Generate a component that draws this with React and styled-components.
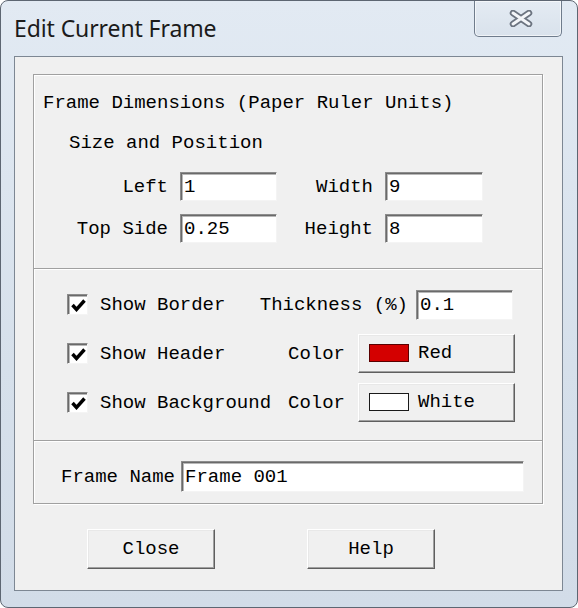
import React from 'react'
import styled, { createGlobalStyle } from 'styled-components'

const GlobalStyle = createGlobalStyle`
  html, body {
    margin: 0;
    padding: 0;
    background: #ffffff;
  }
  * {
    box-sizing: border-box;
  }
`

const App = () => (
  <>
    <GlobalStyle />
    <Window>
      <TitleBar>
        <Title>Edit Current Frame</Title>
        <CloseBox>
          <svg width='24' height='17' viewBox='0 0 24 17'>
            <path d='M4 3 L20 14 M20 3 L4 14' stroke='#6c7480' strokeWidth='6.5' strokeLinecap='round' fill='none' />
            <path d='M4 3 L20 14 M20 3 L4 14' stroke='#f3f5f8' strokeWidth='3' strokeLinecap='round' fill='none' />
          </svg>
        </CloseBox>
      </TitleBar>
      <Client>
        <GroupBox>
          <Section $pad='17px 0 25px 9px'>
            <Label>Frame Dimensions (Paper Ruler Units)</Label>
            <SubHeading>Size and Position</SubHeading>
            <FieldGrid>
              <FieldLabel>Left</FieldLabel>
              <TextBox defaultValue='1' />
              <FieldLabel>Width</FieldLabel>
              <TextBox defaultValue='9' />
              <FieldLabel>Top Side</FieldLabel>
              <TextBox defaultValue='0.25' />
              <FieldLabel>Height</FieldLabel>
              <TextBox defaultValue='8' />
            </FieldGrid>
          </Section>
          <Section $pad='16px 27px 18px 33px'>
            <OptionRow>
              <CheckCell>
                <CheckBox><CheckMark /></CheckBox>
                <Label>Show Border</Label>
              </CheckCell>
              <RightPart $gap='8px'>
                <Label>Thickness (%)</Label>
                <SmallBox defaultValue='0.1' />
              </RightPart>
            </OptionRow>
            <OptionRow $top='10px'>
              <CheckCell>
                <CheckBox><CheckMark /></CheckBox>
                <Label>Show Header</Label>
              </CheckCell>
              <RightPart $gap='13px'>
                <Label>Color</Label>
                <ColorButton>
                  <Swatch $color='#d40000' $edge='#5a0000' />
                  Red
                </ColorButton>
              </RightPart>
            </OptionRow>
            <OptionRow $top='10px'>
              <CheckCell>
                <CheckBox><CheckMark /></CheckBox>
                <Label>Show Background</Label>
              </CheckCell>
              <RightPart $gap='13px'>
                <Label>Color</Label>
                <ColorButton>
                  <Swatch $color='#ffffff' $edge='#1a1a1a' />
                  White
                </ColorButton>
              </RightPart>
            </OptionRow>
          </Section>
          <Section $pad='20px 18px 11px 27px' $last>
            <NameRow>
              <Label>Frame Name</Label>
              <NameBox defaultValue='Frame 001' />
            </NameRow>
          </Section>
        </GroupBox>
        <ButtonRow>
          <PushButton>Close</PushButton>
          <PushButton>Help</PushButton>
        </ButtonRow>
      </Client>
    </Window>
  </>
)

const CheckMark = () => (
  <svg width='15' height='13' viewBox='0 0 15 13'>
    <path d='M1.5 6 L5.5 10.5 L13.5 1.5' stroke='#000' strokeWidth='3.4' fill='none' />
  </svg>
)

const mono = `"Liberation Mono", "DejaVu Sans Mono", monospace`

const Window = styled.div`
  width: 578px;
  height: 608px;
  border: 1px solid #5d6672;
  border-radius: 8px;
  background: linear-gradient(180deg, #e2eaf3 0%, #d6e0eb 60%, #d2dce8 100%);
  display: flex;
  flex-direction: column;
  padding: 0 14px 16px 13px;
  overflow: hidden;
`

const TitleBar = styled.div`
  height: 55px;
  display: flex;
  align-items: flex-start;
  justify-content: space-between;
`

const Title = styled.div`
  font-family: "Noto Sans", "Open Sans", sans-serif;
  font-size: 23px;
  color: #1b1b1b;
  margin-top: 11px;
  letter-spacing: -0.1px;
`

const CloseBox = styled.div`
  width: 88px;
  height: 36px;
  margin-right: 1px;
  border: 1px solid #6f7c8c;
  border-top: none;
  border-radius: 0 0 5px 5px;
  background: linear-gradient(180deg, #e4ebf3 0%, #d9e2ec 100%);
  box-shadow: inset 0 0 0 1px rgba(255, 255, 255, 0.6);
  display: flex;
  align-items: center;
  justify-content: center;
  padding-left: 6px;
`

const Client = styled.div`
  flex: 1;
  border: 1px solid #7d8793;
  background: #f0f0f0;
  padding: 17px 19px 0 18px;
  display: flex;
  flex-direction: column;
`

const GroupBox = styled.div`
  border: 1px solid #a0a0a0;
  box-shadow: 1px 1px 0 #ffffff, inset 1px 1px 0 #ffffff;
  display: flex;
  flex-direction: column;
`

const Section = styled.div`
  padding: ${p => p.$pad};
  border-bottom: ${p => (p.$last ? 'none' : '1px solid #a0a0a0')};
  box-shadow: ${p => (p.$last ? 'none' : '0 1px 0 #ffffff')};
`

const Label = styled.span`
  font-family: ${mono};
  font-size: 19px;
  line-height: 22px;
  color: #000;
  white-space: nowrap;
  display: block;
`

const SubHeading = styled(Label)`
  margin: 18px 0 0 26px;
`

const FieldGrid = styled.div`
  margin-top: 18px;
  display: grid;
  grid-template-columns: 125px 97px 84px 98px;
  grid-auto-rows: 29px;
  column-gap: 12px;
  row-gap: 13px;
  align-items: center;
`

const FieldLabel = styled(Label)`
  text-align: right;
`

const TextBox = styled.input`
  width: 100%;
  height: 29px;
  font-family: ${mono};
  font-size: 19px;
  color: #000;
  background: #fff;
  border-style: solid;
  border-width: 1px;
  border-color: #8c8c8c #f4f4f4 #f4f4f4 #8c8c8c;
  box-shadow: inset 1px 1px 0 #6a6a6a, inset 2px 2px 0 #b8b8b8;
  padding: 1px 0 0 3px;
  outline: none;
`

const SmallBox = styled(TextBox)`
  width: 97px;
  height: 30px;
  margin-right: 2px;
`

const NameBox = styled(TextBox)`
  flex: 1;
  height: 31px;
`

const OptionRow = styled.div`
  height: 39px;
  margin-top: ${p => p.$top || '0'};
  display: flex;
  align-items: center;
`

const CheckCell = styled.div`
  min-width: 188px;
  display: flex;
  align-items: center;
  gap: 12px;
`

const CheckBox = styled.div`
  flex-shrink: 0;
  width: 21px;
  height: 21px;
  background: #fff;
  border-style: solid;
  border-width: 1px;
  border-color: #8c8c8c #f4f4f4 #f4f4f4 #8c8c8c;
  box-shadow: inset 1px 1px 0 #6a6a6a, inset 2px 2px 0 #b8b8b8;
  display: flex;
  align-items: center;
  justify-content: center;
  padding: 1px 0 0 1px;
`

const RightPart = styled.div`
  flex: 1;
  display: flex;
  align-items: center;
  justify-content: flex-end;
  gap: ${p => p.$gap};
`

const RaisedButton = styled.button`
  font-family: ${mono};
  font-size: 19px;
  color: #000;
  background: #f0f0f0;
  border-style: solid;
  border-width: 1px;
  border-color: #ffffff #5f5f5f #5f5f5f #ffffff;
  box-shadow: inset -1px -1px 0 #a0a0a0, inset 1px 1px 0 #e8e8e8;
  cursor: default;
  padding: 0;
`

const ColorButton = styled(RaisedButton)`
  width: 157px;
  height: 39px;
  display: flex;
  align-items: center;
  gap: 9px;
  padding: 0 0 2px 10px;
`

const Swatch = styled.span`
  width: 40px;
  height: 18px;
  background: ${p => p.$color};
  border: 1px solid ${p => p.$edge};
`

const NameRow = styled.div`
  display: flex;
  align-items: center;
  gap: 6px;
`

const ButtonRow = styled.div`
  margin-top: 25px;
  padding-left: 54px;
  display: flex;
  gap: 92px;
`

const PushButton = styled(RaisedButton)`
  width: 128px;
  height: 40px;
`

export default App
